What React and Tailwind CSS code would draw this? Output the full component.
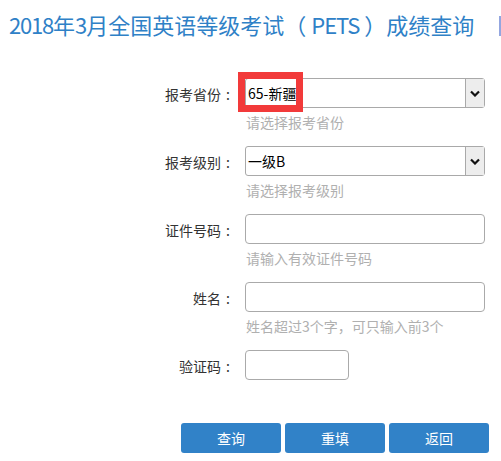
const font = { fontFamily: '"Noto Sans CJK SC", "Noto Sans", sans-serif' };

function Chevron() {
  return (
    <svg width="10" height="7" viewBox="0 0 10 7">
      <polyline points="1,1.5 5,5.5 9,1.5" fill="none" stroke="#111" strokeWidth="2.2" />
    </svg>
  );
}

function Select({ value, marked }) {
  return (
    <div className="relative flex h-[30px] w-[240px] items-center rounded-[3px] border border-[#a9a9a9] bg-white">
      <span className="flex-1 pl-[2px] text-[14px] text-black">{value}</span>
      <span className="flex h-full w-[19px] items-center justify-center border-l border-[#a9a9a9] bg-[#ededed]">
        <Chevron />
      </span>
      {marked && (
        <div className="absolute left-[-8px] top-[-7px] h-[40px] w-[65px] border-[7px] border-[#f23a3a]" />
      )}
    </div>
  );
}

function Input({ w = "w-[240px]" }) {
  return <div className={`h-[30px] ${w} rounded-[4px] border border-[#aaaaaa] bg-white`} />;
}

function Row({ label, children, hint }) {
  return (
    <div className="mb-[14px]">
      <div className="flex items-center">
        <div className="w-[235px] pt-[3px] text-right text-[14px] text-[#333]">
          {label}
          <span className="inline-block w-[14px] text-center">:</span>
        </div>
        <div className="ml-[10px]">{children}</div>
      </div>
      {hint ? (
        <div className="ml-[246px] mt-[4px] h-[20px] text-[14px] leading-[20px] text-[#b0b0b0]">{hint}</div>
      ) : null}
    </div>
  );
}

export default function App() {
  return (
    <div className="h-[461px] w-[501px] overflow-hidden bg-white" style={font}>
      <div className="flex items-start pt-[8px]">
        <h1 className="pl-[9px] text-[22px] leading-[33px] text-[#2f81c7]">
          <span className="tracking-[-1.2px]">2018</span>年<span className="tracking-[-1px]">3</span>月全国英语等级考试（ <span className="tracking-[-1px]">PETS</span> ）成绩查询
        </h1>
        <div className="ml-auto mt-[8px] h-[20px] w-[2px] bg-[#93a6e0]" />
      </div>

      <div className="mt-[37px]">
        <Row label="报考省份" hint="请选择报考省份">
          <Select value="65-新疆" marked />
        </Row>
        <Row label="报考级别" hint="请选择报考级别">
          <Select value="一级B" />
        </Row>
        <Row label="证件号码" hint="请输入有效证件号码">
          <Input />
        </Row>
        <Row label="姓名" hint="姓名超过3个字，可只输入前3个">
          <Input />
        </Row>
        <Row label="验证码">
          <Input w="w-[104px]" />
        </Row>
      </div>

      <div className="ml-[181px] mt-[43px] flex gap-[4px]">
        {["查询", "重填", "返回"].map((t) => (
          <button
            key={t}
            className="h-[30px] w-[100px] rounded-[3px] bg-[#3182c8] text-[14px] text-white"
          >
            {t}
          </button>
        ))}
      </div>
    </div>
  );
}
